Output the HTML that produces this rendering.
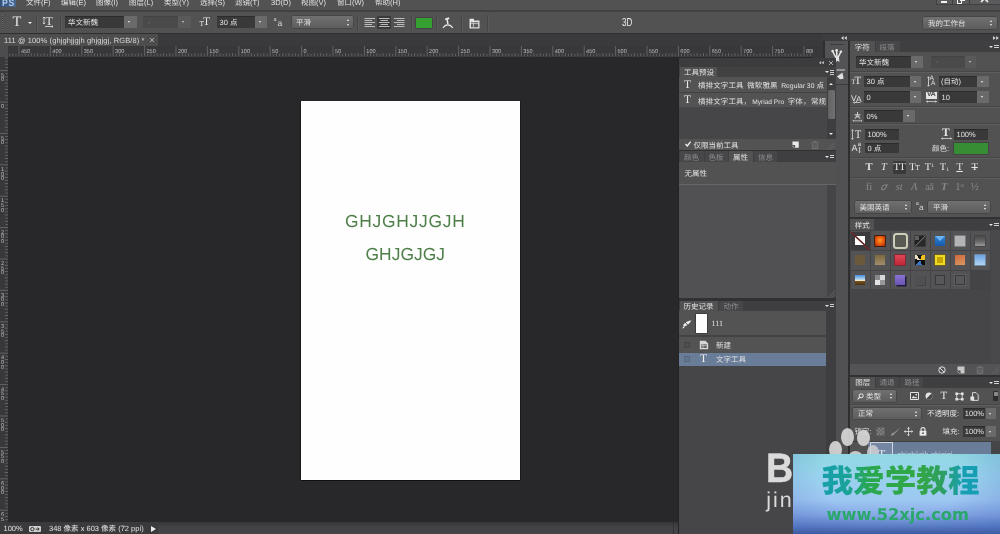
<!DOCTYPE html>
<html lang="zh-CN">
<head>
<meta charset="utf-8">
<title>111 @ 100% (ghjghjjgjh ghjgjgj, RGB/8) *</title>
<style>
html,body{margin:0;padding:0}
body{width:1000px;height:534px;overflow:hidden;position:relative;background:#28272a;
 font-family:"Liberation Sans","Noto Sans CJK SC",sans-serif;font-size:7.5px;line-height:9px;color:#e2e2e2;text-rendering:geometricPrecision}
.a{position:absolute}
.t{position:absolute;white-space:nowrap}
.sf{font-family:"Liberation Serif","Noto Serif CJK SC",serif}
.inp{position:absolute;background:#3a3a3a;box-shadow:inset 0 1px 0 #2c2c2c}
.btn{position:absolute;background:#6b6b6b}
.btn:after{content:"";position:absolute;left:50%;top:50%;margin:-.8px 0 0 -1.8px;border:1.8px solid transparent;border-top:2.2px solid #f0f0f0;border-bottom:0}
.dd{position:absolute;background:linear-gradient(#717171,#5e5e5e);border-radius:1.5px;box-shadow:0 0 0 .5px #3c3c3c}
.ud{position:absolute;width:3.4px;height:6.2px;margin:.4px 0 0 .3px}
.ud:before{content:"";position:absolute;left:0;top:0;border:1.7px solid transparent;border-bottom:2.2px solid #f0f0f0;border-top:0}
.ud:after{content:"";position:absolute;left:0;bottom:0;border:1.7px solid transparent;border-top:2.2px solid #f0f0f0;border-bottom:0}
.vsep{position:absolute;width:1px;background:#464646;box-shadow:1px 0 0 #5c5c5c}
.hl{position:absolute;height:1px;background:#5f5f5f;box-shadow:0 -1px 0 #474747}
.tabrow{position:absolute;background:#424242}
.tab{position:absolute;background:#535353;top:0;bottom:0}
.dim{color:#8e8e8e}
.menuic{width:9px;height:5px}
.menuic:before{content:"";position:absolute;left:-.3px;top:1.3px;border:2px solid transparent;border-top:2.4px solid #e4e4e4;border-bottom:0}
.menuic:after{content:"";position:absolute;left:4.5px;top:0;width:4.5px;height:4.5px;background:repeating-linear-gradient(#d0d0d0 0 .9px,transparent .9px 1.8px)}
</style>
</head>
<body>
<div id="root" style="position:absolute;left:0;top:0;width:1000px;height:534px;overflow:hidden;will-change:transform;opacity:.999">

<!-- ===== menu bar ===== -->
<div class="a" id="menubar" style="left:0;top:0;width:1000px;height:11px;background:#535353;overflow:hidden">
 <div class="a" style="left:0;top:0;width:15.5px;height:7px;background:linear-gradient(90deg,#35527a,#48668f)"></div><div class="t" style="left:2px;top:-.9px;font-size:9.6px;line-height:9px;font-weight:bold;color:#b0cbee;letter-spacing:.9px;transform:scaleX(.9);transform-origin:0 0">PS</div>
 <div class="t" style="left:26px;top:-1.6px">文件(F)</div>
 <div class="t" style="left:61px;top:-1.6px">编辑(E)</div>
 <div class="t" style="left:96px;top:-1.6px">图像(I)</div>
 <div class="t" style="left:129px;top:-1.6px">图层(L)</div>
 <div class="t" style="left:164px;top:-1.6px">类型(Y)</div>
 <div class="t" style="left:200px;top:-1.6px">选择(S)</div>
 <div class="t" style="left:235px;top:-1.6px">滤镜(T)</div>
 <div class="t" style="left:271px;top:-1.6px">3D(D)</div>
 <div class="t" style="left:301px;top:-1.6px">视图(V)</div>
 <div class="t" style="left:337px;top:-1.6px">窗口(W)</div>
 <div class="t" style="left:375px;top:-1.6px">帮助(H)</div>
 <!-- window controls -->
 <div class="a" style="left:935.5px;top:-1px;width:64.5px;height:5.6px;background:#5c5b5d;border:1px solid #414042;border-right:0;box-sizing:border-box"></div>
 <div class="a" style="left:952px;top:0;width:1px;height:5px;background:#3e3e3e"></div>
 <div class="a" style="left:969px;top:0;width:1px;height:5px;background:#3e3e3e"></div>
 <div class="a" style="left:941px;top:1px;width:6px;height:2px;background:#f2f2f2"></div>
 <div class="a" style="left:957.3px;top:-1.5px;width:5.2px;height:5px;border:1.6px solid #f2f2f2;box-sizing:border-box"></div>
 <div class="a" style="left:960px;top:-3.5px;width:4.6px;height:4.500px;border:1.5px solid #f2f2f2;box-sizing:border-box"></div>
 <svg class="a" style="left:979.5px;top:-5px" width="9" height="8" viewBox="0 0 9 8"><path d="M1 0L8 7M8 0L1 7" stroke="#f2f2f2" stroke-width="1.6" fill="none"/></svg>
</div>
<div class="a" style="left:0;top:10.4px;width:1000px;height:1.5px;background:#424143"></div><div class="a" style="left:0;top:11.9px;width:1000px;height:.8px;background:#5a595b"></div>

<!-- ===== options bar ===== -->
<div class="a" id="optbar" style="left:0;top:12px;width:1000px;height:21px;background:#535353">
 <div class="a" style="left:2px;top:3px;width:1px;height:15px;background:repeating-linear-gradient(#6e6e6e 0 1px,#3e3e3e 1px 2px)"></div>
 <div class="t sf" style="left:12.5px;top:1.5px;font-size:14.5px;line-height:16px;color:#e6e6e6">T</div>
 <div class="a" style="left:28px;top:10px;border:2px solid transparent;border-top:2.5px solid #f0f0f0;border-bottom:0"></div>
 <div class="vsep" style="left:36px;top:3px;height:16px"></div>
 <!-- vertical/horizontal toggle -->
 <div class="t sf" style="left:45.5px;top:2.5px;font-size:12px;line-height:13px;color:#e6e6e6">T</div>
 <svg class="a" style="left:42px;top:4px" width="13" height="13" viewBox="0 0 13 13"><path d="M2 1V8M1 2.2L2 1L3 2.2M1 6.8L2 8L3 6.8M3 10.5H11M9.8 9.5L11 10.5L9.8 11.5" stroke="#e6e6e6" stroke-width=".8" fill="none"/></svg>
 <div class="vsep" style="left:60px;top:3px;height:16px"></div>
 <!-- font family -->
 <div class="inp" style="left:64.5px;top:4px;width:59px;height:12px"></div>
 <div class="btn" style="left:123.5px;top:4px;width:13.3px;height:12px"></div>
 <div class="t" style="left:68px;top:6px">华文新魏</div>
 <!-- font style (disabled) -->
 <div class="inp" style="left:143px;top:4px;width:35px;height:12px;background:#4b4b4b;box-shadow:inset 0 1px 0 #444"></div>
 <div class="btn" style="left:178px;top:4px;width:12.5px;height:12px;background:#5d5d5d;opacity:.8"></div>
 <div class="t" style="left:148px;top:5.5px;color:#777">-</div>
 <!-- size -->
 <div class="t sf" style="left:199.5px;top:6.8px;font-size:7.5px;line-height:10px;color:#e6e6e6">T</div>
 <div class="t sf" style="left:203px;top:3.5px;font-size:11.5px;line-height:13px;color:#e6e6e6">T</div>
 <div class="inp" style="left:216.5px;top:4px;width:38px;height:12px"></div>
 <div class="btn" style="left:254.5px;top:4px;width:12px;height:12px"></div>
 <div class="t" style="left:219.5px;top:6px">30 点</div>
 <!-- aa -->
 <div class="t" style="left:273.5px;top:4.5px;font-size:5.5px;line-height:7px;color:#d8d8d8">a</div>
 <div class="t" style="left:277.5px;top:6px;font-size:8.5px;line-height:10px;color:#d8d8d8">a</div>
 <div class="dd" style="left:291.5px;top:4px;width:61px;height:12px"></div>
 <div class="t" style="left:296px;top:6px">平滑</div>
 <div class="ud" style="left:346.5px;top:7px"></div>
 <div class="vsep" style="left:357px;top:3px;height:16px"></div>
 <!-- align -->
 <div class="a" style="left:377px;top:4px;width:14px;height:13px;background:#3b3b3b;border-radius:1px"></div>
 <svg class="a" style="left:364px;top:6px" width="42" height="10" viewBox="0 0 42 10"><g stroke="#bdbdbd" stroke-width="1">
  <path d="M0.5 .5H11M0.5 2.5H8M0.5 4.500H11M0.5 6.500H8M0.5 8.500H11"/>
  <path d="M15 .5H25.500M16.500 2.500H24M15 4.500H25.500M16.500 6.500H24M15 8.500H25.500"/>
  <path d="M30 .5H40.500M33 2.500H40.500M30 4.500H40.500M33 6.500H40.500M30 8.500H40.500"/></g></svg>
 <div class="vsep" style="left:411px;top:3px;height:16px"></div>
 <div class="a" style="left:415.5px;top:5.5px;width:16px;height:10px;background:#37a033;box-shadow:0 0 0 .6px #3d3d3d"></div>
 <div class="vsep" style="left:436px;top:3px;height:16px"></div>
 <!-- warp text -->
 <svg class="a" style="left:442px;top:5px" width="12" height="12" viewBox="0 0 12 12"><path d="M3.2 2.3L7.2 1.2" stroke="#ececec" stroke-width="1.8" fill="none"/><path d="M5.2 2.4L5.8 7" stroke="#ececec" stroke-width="1.5"/><path d="M1 11C3.5 6.8 8 6.8 10.8 11" stroke="#ececec" stroke-width="1.1" fill="none"/></svg>
 <div class="vsep" style="left:460.5px;top:3px;height:16px"></div>
 <!-- panels toggle -->
 <svg class="a" style="left:468.5px;top:5.5px" width="11" height="11" viewBox="0 0 11 11"><path d="M.5 .8H5V2.6H10.5V10.5H.5Z" fill="#e4e4e4"/><path d="M2 4.2H9.2V9.3H2Z" fill="#5a5a5a"/><path d="M2 5.6H9.2M4.4 4.2V9.3" stroke="#e4e4e4" stroke-width=".7"/></svg>
 <div class="vsep" style="left:486.5px;top:3px;height:16px"></div>
 <div class="t" style="left:622px;top:4.8px;font-size:11.6px;line-height:12px;color:#ececec;transform:scaleX(.7);transform-origin:0 0">3D</div>
 <!-- workspace -->
 <div class="dd" style="left:923px;top:5px;width:73.5px;height:12px"></div>
 <div class="t" style="left:928px;top:6.5px">我的工作台</div>
 <div class="ud" style="left:990px;top:7.5px"></div>
</div>
<div class="a" style="left:0;top:33px;width:1000px;height:1px;background:#303030"></div>

<!-- ===== doc tab bar ===== -->
<div class="a" id="doctabs" style="left:0;top:34px;width:1000px;height:12px;background:#3b3a3d">
 <div class="a" style="left:0;top:0;width:158px;height:12px;background:#4e4e4e"></div>
 <div class="t" style="left:4px;top:2px;color:#dcdcdc;letter-spacing:.1px">111 @ 100% (ghjghjjgjh ghjgjgj, RGB/8) *</div>
 <svg class="a" style="left:149.5px;top:4px" width="4" height="4" viewBox="0 0 4 4"><path d="M0 0L4 4M4 0L0 4" stroke="#c4c4c4" stroke-width=".8"/></svg>
</div>

<!-- ===== rulers ===== -->
<div class="a" id="hruler" style="left:0;top:46px;width:813px;height:10.5px;background:#39383b;overflow:hidden"><svg class="a" style="left:0;top:0" width="824" height="10.5" viewBox="0 0 824 10.5"><path d="M9.6 7.8V10.5M15.9 7.8V10.5M22.1 7.8V10.5M28.4 7.8V10.5M34.7 7.8V10.5M41.0 7.8V10.5M47.3 7.8V10.5M53.5 7.8V10.5M59.8 7.8V10.5M66.1 7.8V10.5M72.4 7.8V10.5M78.7 7.8V10.5M84.9 7.8V10.5M91.2 7.8V10.5M97.5 7.8V10.5M103.8 7.8V10.5M110.1 7.8V10.5M116.3 7.8V10.5M122.6 7.8V10.5M128.9 7.8V10.5M135.2 7.8V10.5M141.5 7.8V10.5M147.7 7.8V10.5M154.0 7.8V10.5M160.3 7.8V10.5M166.6 7.8V10.5M172.9 7.8V10.5M179.1 7.8V10.5M185.4 7.8V10.5M191.7 7.8V10.5M198.0 7.8V10.5M204.3 7.8V10.5M210.5 7.8V10.5M216.8 7.8V10.5M223.1 7.8V10.5M229.4 7.8V10.5M235.7 7.8V10.5M241.9 7.8V10.5M248.2 7.8V10.5M254.5 7.8V10.5M260.8 7.8V10.5M267.1 7.8V10.5M273.3 7.8V10.5M279.6 7.8V10.5M285.9 7.8V10.5M292.2 7.8V10.5M298.5 7.8V10.5M304.7 7.8V10.5M311.0 7.8V10.5M317.3 7.8V10.5M323.6 7.8V10.5M329.9 7.8V10.5M336.1 7.8V10.5M342.4 7.8V10.5M348.7 7.8V10.5M355.0 7.8V10.5M361.3 7.8V10.5M367.5 7.8V10.5M373.8 7.8V10.5M380.1 7.8V10.5M386.4 7.8V10.5M392.7 7.8V10.5M398.9 7.8V10.5M405.2 7.8V10.5M411.5 7.8V10.5M417.8 7.8V10.5M424.1 7.8V10.5M430.3 7.8V10.5M436.6 7.8V10.5M442.9 7.8V10.5M449.2 7.8V10.5M455.5 7.8V10.5M461.7 7.8V10.5M468.0 7.8V10.5M474.3 7.8V10.5M480.6 7.8V10.5M486.9 7.8V10.5M493.1 7.8V10.5M499.4 7.8V10.5M505.7 7.8V10.5M512.0 7.8V10.5M518.3 7.8V10.5M524.5 7.8V10.5M530.8 7.8V10.5M537.1 7.8V10.5M543.4 7.8V10.5M549.7 7.8V10.5M555.9 7.8V10.5M562.2 7.8V10.5M568.5 7.8V10.5M574.8 7.8V10.5M581.1 7.8V10.5M587.3 7.8V10.5M593.6 7.8V10.5M599.9 7.8V10.5M606.2 7.8V10.5M612.5 7.8V10.5M618.7 7.8V10.5M625.0 7.8V10.5M631.3 7.8V10.5M637.6 7.8V10.5M643.9 7.8V10.5M650.1 7.8V10.5M656.4 7.8V10.5M662.7 7.8V10.5M669.0 7.8V10.5M675.3 7.8V10.5M681.5 7.8V10.5M687.8 7.8V10.5M694.1 7.8V10.5M700.4 7.8V10.5M706.7 7.8V10.5M712.9 7.8V10.5M719.2 7.8V10.5M725.5 7.8V10.5M731.8 7.8V10.5M738.1 7.8V10.5M744.3 7.8V10.5M750.6 7.8V10.5M756.9 7.8V10.5M763.2 7.8V10.5M769.5 7.8V10.5M775.7 7.8V10.5M782.0 7.8V10.5M788.3 7.8V10.5M794.6 7.8V10.5M800.9 7.8V10.5M807.1 7.8V10.5M813.4 7.8V10.5M819.7 7.8V10.5" stroke="#605f62" stroke-width="1"/><path d="M12.7 7.2V10.5M25.3 7.2V10.5M31.6 7.2V10.5M37.8 7.2V10.5M44.1 7.2V10.5M56.7 7.2V10.5M63.0 7.2V10.5M69.2 7.2V10.5M75.5 7.2V10.5M88.1 7.2V10.5M94.4 7.2V10.5M100.6 7.2V10.5M106.9 7.2V10.5M119.5 7.2V10.5M125.8 7.2V10.5M132.0 7.2V10.5M138.3 7.2V10.5M150.9 7.2V10.5M157.2 7.2V10.5M163.4 7.2V10.5M169.7 7.2V10.5M182.3 7.2V10.5M188.6 7.2V10.5M194.8 7.2V10.5M201.1 7.2V10.5M213.7 7.2V10.5M220.0 7.2V10.5M226.2 7.2V10.5M232.5 7.2V10.5M245.1 7.2V10.5M251.4 7.2V10.5M257.6 7.2V10.5M263.9 7.2V10.5M276.5 7.2V10.5M282.8 7.2V10.5M289.0 7.2V10.5M295.3 7.2V10.5M307.9 7.2V10.5M314.2 7.2V10.5M320.4 7.2V10.5M326.7 7.2V10.5M339.3 7.2V10.5M345.6 7.2V10.5M351.8 7.2V10.5M358.1 7.2V10.5M370.7 7.2V10.5M377.0 7.2V10.5M383.2 7.2V10.5M389.5 7.2V10.5M402.1 7.2V10.5M408.4 7.2V10.5M414.6 7.2V10.5M420.9 7.2V10.5M433.5 7.2V10.5M439.8 7.2V10.5M446.0 7.2V10.5M452.3 7.2V10.5M464.9 7.2V10.5M471.2 7.2V10.5M477.4 7.2V10.5M483.7 7.2V10.5M496.3 7.2V10.5M502.6 7.2V10.5M508.8 7.2V10.5M515.1 7.2V10.5M527.7 7.2V10.5M534.0 7.2V10.5M540.2 7.2V10.5M546.5 7.2V10.5M559.1 7.2V10.5M565.4 7.2V10.5M571.6 7.2V10.5M577.9 7.2V10.5M590.5 7.2V10.5M596.8 7.2V10.5M603.0 7.2V10.5M609.3 7.2V10.5M621.9 7.2V10.5M628.2 7.2V10.5M634.4 7.2V10.5M640.7 7.2V10.5M653.3 7.2V10.5M659.6 7.2V10.5M665.8 7.2V10.5M672.1 7.2V10.5M684.7 7.2V10.5M691.0 7.2V10.5M697.2 7.2V10.5M703.5 7.2V10.5M716.1 7.2V10.5M722.4 7.2V10.5M728.6 7.2V10.5M734.9 7.2V10.5M747.5 7.2V10.5M753.8 7.2V10.5M760.0 7.2V10.5M766.3 7.2V10.5M778.9 7.2V10.5M785.2 7.2V10.5M791.4 7.2V10.5M797.7 7.2V10.5M810.3 7.2V10.5M816.6 7.2V10.5M822.8 7.2V10.5" stroke="#656467" stroke-width="1"/><path d="M19.0 0V10.5M50.4 0V10.5M81.8 0V10.5M113.2 0V10.5M144.6 0V10.5M176.0 0V10.5M207.4 0V10.5M238.8 0V10.5M270.2 0V10.5M301.6 0V10.5M333.0 0V10.5M364.4 0V10.5M395.8 0V10.5M427.2 0V10.5M458.6 0V10.5M490.0 0V10.5M521.4 0V10.5M552.8 0V10.5M584.2 0V10.5M615.6 0V10.5M647.0 0V10.5M678.4 0V10.5M709.8 0V10.5M741.2 0V10.5M772.6 0V10.5M804.0 0V10.5" stroke="#69686b" stroke-width=".9"/><g font-size="5.6" fill="#bdbdbd" font-family="Liberation Sans, sans-serif" text-rendering="geometricPrecision"><text x="20.9" y="6.9">450</text><text x="52.3" y="6.9">400</text><text x="83.7" y="6.9">350</text><text x="115.1" y="6.9">300</text><text x="146.5" y="6.9">250</text><text x="177.9" y="6.9">200</text><text x="209.3" y="6.9">150</text><text x="240.7" y="6.9">100</text><text x="272.1" y="6.9">50</text><text x="303.5" y="6.9">0</text><text x="334.9" y="6.9">50</text><text x="366.3" y="6.9">100</text><text x="397.7" y="6.9">150</text><text x="429.1" y="6.9">200</text><text x="460.5" y="6.9">250</text><text x="491.9" y="6.9">300</text><text x="523.3" y="6.9">350</text><text x="554.7" y="6.9">400</text><text x="586.1" y="6.9">450</text><text x="617.5" y="6.9">500</text><text x="648.9" y="6.9">550</text><text x="680.3" y="6.9">600</text><text x="711.7" y="6.9">650</text><text x="743.1" y="6.9">700</text><text x="774.5" y="6.9">750</text><text x="805.9" y="6.9">800</text></g></svg></div>
<div class="a" id="vruler" style="left:0;top:56.5px;width:8px;height:466px;background:#39383b;overflow:hidden"><svg class="a" style="left:0;top:0" width="8" height="466" viewBox="0 0 8 466"><path d="M5.3 4.2H8M5.3 10.5H8M5.3 16.7H8M5.3 23.0H8M5.3 29.3H8M5.3 35.6H8M5.3 41.9H8M5.3 48.1H8M5.3 54.4H8M5.3 60.7H8M5.3 67.0H8M5.3 73.3H8M5.3 79.5H8M5.3 85.8H8M5.3 92.1H8M5.3 98.4H8M5.3 104.7H8M5.3 110.9H8M5.3 117.2H8M5.3 123.5H8M5.3 129.8H8M5.3 136.1H8M5.3 142.3H8M5.3 148.6H8M5.3 154.9H8M5.3 161.2H8M5.3 167.5H8M5.3 173.7H8M5.3 180.0H8M5.3 186.3H8M5.3 192.6H8M5.3 198.9H8M5.3 205.1H8M5.3 211.4H8M5.3 217.7H8M5.3 224.0H8M5.3 230.3H8M5.3 236.5H8M5.3 242.8H8M5.3 249.1H8M5.3 255.4H8M5.3 261.7H8M5.3 267.9H8M5.3 274.2H8M5.3 280.5H8M5.3 286.8H8M5.3 293.1H8M5.3 299.3H8M5.3 305.6H8M5.3 311.9H8M5.3 318.2H8M5.3 324.5H8M5.3 330.7H8M5.3 337.0H8M5.3 343.3H8M5.3 349.6H8M5.3 355.9H8M5.3 362.1H8M5.3 368.4H8M5.3 374.7H8M5.3 381.0H8M5.3 387.3H8M5.3 393.5H8M5.3 399.8H8M5.3 406.1H8M5.3 412.4H8M5.3 418.7H8M5.3 424.9H8M5.3 431.2H8M5.3 437.5H8M5.3 443.8H8M5.3 450.1H8M5.3 456.3H8M5.3 462.6H8" stroke="#605f62" stroke-width="1"/><path d="M4.7 1.0H8M4.7 7.3H8M4.7 19.9H8M4.7 26.2H8M4.7 32.4H8M4.7 38.7H8M4.7 51.3H8M4.7 57.6H8M4.7 63.8H8M4.7 70.1H8M4.7 82.7H8M4.7 89.0H8M4.7 95.2H8M4.7 101.5H8M4.7 114.1H8M4.7 120.4H8M4.7 126.6H8M4.7 132.9H8M4.7 145.5H8M4.7 151.8H8M4.7 158.0H8M4.7 164.3H8M4.7 176.9H8M4.7 183.2H8M4.7 189.4H8M4.7 195.7H8M4.7 208.3H8M4.7 214.6H8M4.7 220.8H8M4.7 227.1H8M4.7 239.7H8M4.7 246.0H8M4.7 252.2H8M4.7 258.5H8M4.7 271.1H8M4.7 277.4H8M4.7 283.6H8M4.7 289.9H8M4.7 302.5H8M4.7 308.8H8M4.7 315.0H8M4.7 321.3H8M4.7 333.9H8M4.7 340.2H8M4.7 346.4H8M4.7 352.7H8M4.7 365.3H8M4.7 371.6H8M4.7 377.8H8M4.7 384.1H8M4.7 396.7H8M4.7 403.0H8M4.7 409.2H8M4.7 415.5H8M4.7 428.1H8M4.7 434.4H8M4.7 440.6H8M4.7 446.9H8M4.7 459.5H8M4.7 465.8H8" stroke="#656467" stroke-width="1"/><path d="M0 13.6H8M0 45.0H8M0 76.4H8M0 107.8H8M0 139.2H8M0 170.6H8M0 202.0H8M0 233.4H8M0 264.8H8M0 296.2H8M0 327.6H8M0 359.0H8M0 390.4H8M0 421.8H8M0 453.2H8" stroke="#69686b" stroke-width=".9"/><g font-size="5.6" fill="#bdbdbd" font-family="Liberation Sans, sans-serif" text-rendering="geometricPrecision"><text x="1" y="19.8">5</text><text x="1" y="24.4">0</text><text x="1" y="51.2">0</text><text x="1" y="82.6">5</text><text x="1" y="87.2">0</text><text x="1" y="114.0">1</text><text x="1" y="118.6">0</text><text x="1" y="123.2">0</text><text x="1" y="145.4">1</text><text x="1" y="150.0">5</text><text x="1" y="154.6">0</text><text x="1" y="176.8">2</text><text x="1" y="181.4">0</text><text x="1" y="186.0">0</text><text x="1" y="208.2">2</text><text x="1" y="212.8">5</text><text x="1" y="217.4">0</text><text x="1" y="239.6">3</text><text x="1" y="244.2">0</text><text x="1" y="248.8">0</text><text x="1" y="271.0">3</text><text x="1" y="275.6">5</text><text x="1" y="280.2">0</text><text x="1" y="302.4">4</text><text x="1" y="307.0">0</text><text x="1" y="311.6">0</text><text x="1" y="333.8">4</text><text x="1" y="338.4">5</text><text x="1" y="343.0">0</text><text x="1" y="365.2">5</text><text x="1" y="369.8">0</text><text x="1" y="374.4">0</text><text x="1" y="396.6">5</text><text x="1" y="401.2">5</text><text x="1" y="405.8">0</text><text x="1" y="428.0">6</text><text x="1" y="432.6">0</text><text x="1" y="437.2">0</text><text x="1" y="459.4">6</text><text x="1" y="464.0">5</text></g></svg></div>
<div class="a" style="left:0;top:46px;width:7.8px;height:10.5px;background:#4d4c4f"></div>

<!-- ===== document ===== -->
<div class="a" id="doc" style="left:301px;top:101px;width:219px;height:378.5px;background:#fff;box-shadow:0 1px 0 #111,1px 0 0 #1a1a1a,-1px 0 0 #1a1a1a">
 <div class="t" id="l1" style="left:44px;top:109.5px;font-size:17.4px;line-height:20px;color:#4f804a;letter-spacing:.75px">GHJGHJJGJH</div>
 <div class="t" id="l2" style="left:64.5px;top:142.5px;font-size:17.4px;line-height:20px;color:#4f804a;letter-spacing:.05px">GHJGJGJ</div>
</div>

<!-- ===== status bar ===== -->
<div class="a" id="status" style="left:0;top:522px;width:679px;height:12px;background:linear-gradient(#363538,#444346 45%,#454447)">
 <div class="a" style="left:0;top:0;width:158px;height:12px;background:#3b3a3d"></div>
 <div class="a" style="left:28.8px;top:4px;width:12.6px;height:6.2px;background:#cfcfcf;border-radius:1px"></div>
 <svg class="a" style="left:28.8px;top:4px" width="12.6" height="6.2" viewBox="0 0 12.6 6.2"><circle cx="3.4" cy="3.1" r="1.7" fill="none" stroke="#333" stroke-width="1"/><path d="M6.8 3.1H9.6M8.6 1.6L10.2 3.1L8.600 4.600" stroke="#333" stroke-width="1" fill="none"/></svg>
 <div class="a" style="left:673px;top:0;width:1px;height:12px;background:#333235"></div>
 <div class="t" style="left:3.5px;top:1.5px">100%</div>
 <div class="t" style="left:49px;top:1.5px">348 像素 x 603 像素 (72 ppi)</div>
 <div class="a" style="left:151px;top:3.5px;border:3px solid transparent;border-left:5px solid #eee;border-right:0"></div>
</div>


<!-- ===== dock header strip + icon strip ===== -->
<div class="a" style="left:813px;top:46px;width:12px;height:12px;background:#39383b"></div>
<div class="a" style="left:823px;top:34px;width:177px;height:7px;background:#3e3d40"></div>
<svg class="a" style="left:840.5px;top:35.5px" width="6" height="4" viewBox="0 0 6 4"><path d="M2.6 0V4L0 2ZM5.8 0V4L3.2 2Z" fill="#d6d6d6"/></svg>
<svg class="a" style="left:993px;top:35.5px" width="6" height="4" viewBox="0 0 6 4"><path d="M0 0V4L2.6 2ZM3.2 0V4L5.8 2Z" fill="#d6d6d6"/></svg>
<div class="a" style="left:823px;top:41px;width:27px;height:493px;background:#2f2e31"></div>
<div class="a" id="iconstrip" style="left:825px;top:41px;width:23px;height:493px;background:#545355">
 <div class="a" style="left:4.5px;top:2.5px;width:14px;height:1px;background:#3d3d3d"></div>
 <div class="a" style="left:0;top:43.3px;width:23px;height:1px;background:#3a393b"></div><div class="a" style="left:0;top:44.3px;width:23px;height:449px;background:#525153"></div>
 <svg class="a" style="left:6px;top:8px" width="12" height="14" viewBox="0 0 12 14"><g stroke="#e8e8e8" stroke-width="1.5" fill="none" stroke-linecap="round"><path d="M1.5 2L4.6 8"/><path d="M5.6 1L5.9 7.5"/><path d="M10 2.5L7.3 8"/></g><path d="M4.4 7.6L7.8 7.6L8.4 13L6.3 11.5L5 13Z" fill="#e8e8e8"/><circle cx="1.6" cy="2" r="1.2" fill="#e8e8e8"/><circle cx="5.6" cy="1.2" r="1.2" fill="#e8e8e8"/><circle cx="9.9" cy="2.600" r="1.2" fill="#e8e8e8"/></svg>
 <svg class="a" style="left:9px;top:28px" width="12" height="11" viewBox="0 0 12 11"><path d="M2.5 1H11" stroke="#d8d8d8" stroke-width="1"/><path d="M3 7.5L8.5 3.5L9.6 9.8L6 10.2Z" fill="#e0e0e0"/></svg>
</div>

<!-- ===== floating panel group ===== -->
<div class="a" id="float" style="left:677.5px;top:57.5px;width:158.5px;height:477px;background:#252426">
<div class="a" id="floatin" style="left:1.5px;top:0;width:157px;height:477px;background:#535353">
 <!-- title strip -->
 <div class="a" style="left:0;top:0;width:157px;height:9.5px;background:#3d3c3f"></div>
 <svg class="a" style="left:140px;top:3.5px" width="5" height="3.4" viewBox="0 0 6 4"><path d="M2.6 0V4L0 2ZM5.8 0V4L3.2 2Z" fill="#c8c8c8"/></svg>
 <svg class="a" style="left:150.3px;top:3px" width="4" height="4" viewBox="0 0 4 4"><path d="M0 0L4 4M4 0L0 4" stroke="#cfcfcf" stroke-width=".75"/></svg>
 <!-- tool presets -->
 <div class="tabrow" style="left:0;top:9.5px;width:157px;height:10.5px">
  <div class="tab" style="left:1px;width:37px"></div>
  <div class="t" style="left:5px;top:1px">工具预设</div>
  <div class="a menuic" style="left:146px;top:3px"></div>
 </div>
 <div class="a" style="left:0;top:19.7px;width:147.5px;height:14.8px;background:#545454"></div>
 <div class="a" style="left:0;top:34.5px;width:147.5px;height:1px;background:#434343"></div>
 <div class="a" style="left:0;top:35.5px;width:147.5px;height:13.6px;background:#545454"></div>
 <div class="a" style="left:0;top:49.1px;width:147.5px;height:32.4px;background:#474648"></div>
 <div class="t sf" style="left:5px;top:21.5px;font-size:11.5px;line-height:12px;color:#e8e8e8">T</div>
 <div class="t sf" style="left:5px;top:36.5px;font-size:11.5px;line-height:12px;color:#e8e8e8">T</div>
 <div class="t" style="left:19px;top:23.7px;word-spacing:1.4px;letter-spacing:.1px">横排文字工具 微软雅黑 <span style="font-size:6.8px;letter-spacing:0;word-spacing:0">Regular 30</span> <span style="margin-left:-1.5px">点</span></div>
 <div class="t" style="left:19px;top:39px;word-spacing:1.4px;letter-spacing:.1px">横排文字工具，<span style="font-size:6.6px;letter-spacing:0;word-spacing:0;margin-left:1px">Myriad Pro</span> 字体，<span style="margin-left:.5px">常规</span></div>
 <!-- scrollbar -->
 <div class="a" style="left:147.5px;top:20px;width:9.5px;height:61.5px;background:#3f3e41"></div>
 <div class="a" style="left:148.600px;top:32px;width:7.4px;height:29px;background:linear-gradient(90deg,#646464,#727272);border-radius:1.5px"></div>
 <div class="a" style="left:150.3px;top:25px;border:2px solid transparent;border-bottom:2.5px solid #eee;border-top:0"></div>
 <div class="a" style="left:150.3px;top:75px;border:2px solid transparent;border-top:2.5px solid #eee;border-bottom:0"></div>
 <!-- footer -->
 <div class="a" style="left:0;top:81.5px;width:157px;height:11px;background:#545454"></div>
 <svg class="a" style="left:6px;top:83.5px" width="6" height="6" viewBox="0 0 6 6"><path d="M.5 3L2.3 5L5.6 .6" stroke="#f0f0f0" stroke-width="1.3" fill="none"/></svg>
 <div class="t" style="left:14.5px;top:83px">仅限当前工具</div>
 <svg class="a" style="left:113.300px;top:83.8px" width="7.2" height="7.2" viewBox="0 0 8 8"><path d="M.5 .5H7.5V7.5H3.5V4.5H.5Z" fill="#ececec"/><path d="M.5 5.5L2.5 7.5" stroke="#ececec" stroke-width=".8"/></svg>
 <svg class="a" style="left:131.5px;top:83.5px" width="8" height="8" viewBox="0 0 8 8"><path d="M.5 1.8H7.5M2.8 1.5V.5H5.2V1.5M1.3 2.5V7.5H6.7V2.5M3 3.5V6.5M5 3.5V6.5" stroke="#7a7a7a" stroke-width=".8" fill="none"/></svg>
 <svg class="a" style="left:147px;top:84px" width="8" height="8" viewBox="0 0 8 8"><path d="M8 1L1 8M8 4L4 8" stroke="#6a6a6a" stroke-width=".8"/></svg>

 <!-- properties group -->
 <div class="a" style="left:0;top:92.5px;width:157px;height:1px;background:#323134"></div>
 <div class="tabrow" style="left:0;top:93.5px;width:157px;height:11px;background:#403f42">
  <div class="tab" style="left:1px;width:23.5px;background:#48474a"></div>
  <div class="tab" style="left:25.5px;width:23px;background:#48474a"></div>
  <div class="tab" style="left:49.5px;width:24.5px"></div>
  <div class="tab" style="left:75px;width:22.5px;background:#48474a"></div>
  <div class="t dim" style="left:5px;top:1.5px">颜色</div>
  <div class="t dim" style="left:29.5px;top:1.5px">色板</div>
  <div class="t" style="left:54px;top:1.5px">属性</div>
  <div class="t dim" style="left:79px;top:1.5px">信息</div>
  <div class="a menuic" style="left:146px;top:3.5px"></div>
 </div>
 <div class="t" style="left:5.5px;top:111px">无属性</div>
 <div class="a" style="left:0;top:126.2px;width:157px;height:1px;background:#676668"></div><div class="a" style="left:0;top:127.2px;width:147.5px;height:113.300px;background:#525153"></div>
 <div class="a" style="left:147.5px;top:127px;width:9.5px;height:113.5px;background:#464547"></div>
 <svg class="a" style="left:148px;top:232px" width="8" height="8" viewBox="0 0 8 8"><path d="M8 1L1 8M8 4L4 8" stroke="#6a6a6a" stroke-width=".8"/></svg>

 <!-- history group -->
 <div class="a" style="left:0;top:240.5px;width:157px;height:2.5px;background:#323134"></div>
 <div class="tabrow" style="left:0;top:243px;width:157px;height:10.5px;background:#403f42">
  <div class="tab" style="left:1px;width:38px"></div>
  <div class="tab" style="left:40px;width:24px;background:#48474a"></div>
  <div class="t" style="left:4.5px;top:1px">历史记录</div>
  <div class="t dim" style="left:44.5px;top:1px">动作</div>
  <div class="a menuic" style="left:146px;top:3.5px"></div>
 </div>
 <div class="a" style="left:0;top:253.5px;width:147px;height:24.5px;background:#545454"></div>
 <div class="a" style="left:0;top:277px;width:147px;height:2.8px;background:#444345"></div>
 <div class="a" style="left:0;top:279.8px;width:147px;height:15.2px;background:#545454"></div>
 <div class="a" style="left:0;top:295.2px;width:147px;height:13.1px;background:#6a7d99"></div>
 <div class="a" style="left:0;top:308.3px;width:157px;height:168.7px;background:#474648"></div>
 <div class="a" style="left:147.3px;top:253.5px;width:9.7px;height:224px;background:#3f3e41"></div>
 <!-- snapshot row -->
 <svg class="a" style="left:3px;top:261.3px" width="10" height="10" viewBox="0 0 10 10"><path d="M1 6.2C2.5 3.5 5.5 1.8 9.3 1.2C8.2 4.2 5.5 6.4 2.6 7.6Z" fill="#ececec"/><path d="M.4 9.4C.8 8 1.4 7.2 2.4 7.4C2.8 8.6 1.8 9.4 .4 9.4Z" fill="#ececec"/><path d="M3 3L7 7.5" stroke="#545454" stroke-width="1"/></svg>
 <div class="a" style="left:16.5px;top:256.4px;width:11.5px;height:18.8px;background:#fff;box-shadow:0 0 0 .6px #333"></div>
 <div class="t sf" style="left:32.5px;top:261.6px;font-size:8px">111</div>
 <!-- rows -->
 <div class="a" style="left:5px;top:284.2px;width:6px;height:6px;box-sizing:border-box;border:1px solid #454545;background:#505050"></div>
 <svg class="a" style="left:20px;top:282.6px" width="10" height="10" viewBox="0 0 10 10"><path d="M.8 .8H6.4L9.2 3.4V9.2H.8Z" fill="#d8d8d8"/><path d="M2.2 4.2H7.8V8H2.2Z" fill="#6a6a6a"/><path d="M2.2 5.4H7.8M4 4.2V8" stroke="#d8d8d8" stroke-width=".6"/></svg>
 <div class="t" style="left:37px;top:283px">新建</div>
 <div class="a" style="left:5px;top:298.4px;width:6px;height:6px;box-sizing:border-box;border:1px solid #56677f;background:#64778f"></div>
 <div class="t sf" style="left:21px;top:295.2px;font-size:11.5px;line-height:12px;color:#f0f0f0">T</div>
 <div class="t" style="left:37px;top:297.1px">文字工具</div>
</div>
</div>

<div class="a" id="dock" style="left:850px;top:41px;width:150px;height:493px;background:#323134">
<div class="a" id="charp" style="left:0;top:0;width:150px;height:176px;background:#535353">
<div class="tabrow" style="left:0;top:0;width:150px;height:11px;background:#403f42"><div class="tab" style="left:0;width:24.5px"></div><div class="tab" style="left:25.5px;width:24.5px;background:#48474a"></div><div class="t" style="left:4.8px;top:1.5px">字符</div><div class="t dim" style="left:29.5px;top:1.5px">段落</div><div class="a menuic" style="left:139.5px;top:3.5px"></div></div>
<div class="inp" style="left:6px;top:15.2px;width:55px;height:11.6px;"></div>
<div class="btn" style="left:61px;top:15.2px;width:12.3px;height:11.6px;"></div>
<div class="t" style="left:9px;top:16.7px;">华文新魏</div>
<div class="inp" style="left:81.4px;top:15.2px;width:33.2px;height:11.6px;background:#4b4b4b;box-shadow:inset 0 1px 0 #444"></div>
<div class="btn" style="left:114.6px;top:15.2px;width:11.8px;height:11.6px;background:#5d5d5d;opacity:.8"></div>
<div class="t" style="left:86px;top:16.2px;color:#777">-</div>
<div class="hl" style="left:0;top:30.5px;width:150px"></div>
<div class="t sf" style="left:1.3px;top:37.2px;font-size:7px;line-height:9px;color:#e6e6e6">T</div>
<div class="t sf" style="left:4.5px;top:34.3px;font-size:11px;line-height:12px;color:#e6e6e6">T</div>
<div class="inp" style="left:14.4px;top:34.6px;width:45.6px;height:11.8px;"></div>
<div class="btn" style="left:60px;top:34.6px;width:11px;height:11.8px;"></div>
<div class="t" style="left:16.5px;top:36.2px;">30 点</div>
<svg class="a" style="left:76.5px;top:34.5px" width="10" height="12" viewBox="0 0 10 12"><path d="M1.5 .8V10.2M.5 2L1.5 .8L2.5 2M.5 9L1.5 10.2L2.5 9" stroke="#e2e2e2" stroke-width=".8" fill="none"/></svg>
<div class="t" style="left:79.5px;top:33.8px;font-size:6.5px;line-height:8px;color:#e2e2e2">A</div>
<div class="t" style="left:81px;top:39px;font-size:6.5px;line-height:8px;color:#e2e2e2">A</div>
<div class="inp" style="left:89px;top:34.6px;width:37.8px;height:11.8px;"></div>
<div class="btn" style="left:126.8px;top:34.6px;width:12.2px;height:11.8px;"></div>
<div class="t" style="left:91px;top:36.2px;">(自动)</div>
<div class="t" style="left:1px;top:51.8px;font-size:8.5px;line-height:10px;color:#e2e2e2">V</div>
<div class="t" style="left:6px;top:52.8px;font-size:8.5px;line-height:10px;color:#e2e2e2">A</div>
<svg class="a" style="left:2.5px;top:60px" width="8" height="3" viewBox="0 0 8 3"><path d="M.5 1.5H7.5M1.7 .5L.5 1.5L1.7 2.5" stroke="#e2e2e2" stroke-width=".7" fill="none"/></svg>
<div class="inp" style="left:14.4px;top:50.3px;width:45.6px;height:11.7px;"></div>
<div class="btn" style="left:60px;top:50.3px;width:11px;height:11.7px;"></div>
<div class="t" style="left:16.5px;top:51.8px;">0</div>
<div class="a" style="left:76.3px;top:51.3px;width:10.5px;height:6.5px;background:#e6e6e6"></div>
<div class="t" style="left:77px;top:50.3px;font-size:6.8px;line-height:8.5px;color:#444;font-weight:bold;letter-spacing:-.4px">VA</div>
<svg class="a" style="left:76px;top:59.2px" width="11" height="3" viewBox="0 0 11 3"><path d="M.5 1.5H10.5M1.7 .5L.5 1.5L1.7 2.5M9.3 .5L10.5 1.5L9.3 2.5" stroke="#e6e6e6" stroke-width=".7" fill="none"/></svg>
<div class="inp" style="left:89px;top:50.3px;width:37.8px;height:11.7px;"></div>
<div class="btn" style="left:126.8px;top:50.3px;width:12.2px;height:11.7px;"></div>
<div class="t" style="left:91.5px;top:51.8px;">10</div>
<div class="hl" style="left:0;top:66px;width:150px"></div>
<svg class="a" style="left:1.8px;top:69.5px" width="11" height="11" viewBox="0 0 11 11"><path d="M1 9.8H10M1.8 9L1 9.8L1.8 10.6M9.2 9L10 9.8L9.2 10.6" stroke="#dcdcdc" stroke-width=".7" fill="none"/><path d="M2.5 3.8H8.5M5.5 1V3.8M3 7.8L5.5 3.8L8 7.8M3.6 5.8H7.4" stroke="#dcdcdc" stroke-width=".9" fill="none"/></svg>
<div class="inp" style="left:14.4px;top:69px;width:38.6px;height:11.6px;"></div>
<div class="btn" style="left:53px;top:69px;width:12px;height:11.6px;"></div>
<div class="t" style="left:16.5px;top:70.5px;">0%</div>
<div class="hl" style="left:0;top:83px;width:150px"></div>
<div class="t sf" style="left:4.5px;top:86.6px;font-size:12px;line-height:13px;color:#e6e6e6;transform:scaleX(.85);transform-origin:0 0">T</div>
<svg class="a" style="left:1.3px;top:88px" width="3" height="11" viewBox="0 0 3 11"><path d="M1.5 .6V10.4M.5 1.8L1.5 .6L2.5 1.8M.5 9.2L1.5 10.4L2.5 9.2" stroke="#e2e2e2" stroke-width=".7" fill="none"/></svg>
<div class="inp" style="left:15.2px;top:88px;width:34.1px;height:10.8px;"></div>
<div class="t" style="left:17.5px;top:89.2px;">100%</div>
<div class="t sf" style="left:92px;top:85.8px;font-size:11.5px;line-height:12px;color:#e6e6e6;font-weight:bold">T</div>
<svg class="a" style="left:91px;top:96.3px" width="11" height="3" viewBox="0 0 11 3"><path d="M.5 1.5H10.5M1.7 .5L.5 1.5L1.7 2.5M9.3 .5L10.5 1.5L9.3 2.5" stroke="#e6e6e6" stroke-width=".7" fill="none"/></svg>
<div class="inp" style="left:104px;top:88px;width:34.3px;height:10.8px;"></div>
<div class="t" style="left:106.5px;top:89.2px;">100%</div>
<div class="t" style="left:1.5px;top:102px;font-size:9px;line-height:10px;color:#e2e2e2">A</div>
<div class="t" style="left:7.8px;top:100.6px;font-size:6px;line-height:7px;color:#e2e2e2">a</div>
<svg class="a" style="left:8.3px;top:106.3px" width="3" height="6" viewBox="0 0 3 6"><path d="M1.5 .4V5.6M.5 1.4L1.5 .4L2.5 1.4M.5 4.6L1.5 5.6L2.5 4.6" stroke="#e2e2e2" stroke-width=".7" fill="none"/></svg>
<div class="inp" style="left:15.2px;top:101.6px;width:34.1px;height:10.8px;"></div>
<div class="t" style="left:17.5px;top:102.8px;">0 点</div>
<div class="t" style="left:82px;top:102.8px;">颜色:</div>
<div class="a" style="left:103.7px;top:101.8px;width:34px;height:11px;background:#388e34;box-shadow:0 0 0 .6px #3a3a3a"></div>
<div class="hl" style="left:0;top:116.5px;width:150px"></div>
<div class="a" style="left:42.8px;top:119.8px;width:13.6px;height:13.2px;background:#3b3b3b;border-radius:1px"></div>
<div class="t sf" style="left:9px;top:121.2px;width:20px;text-align:center;font-size:10.5px;line-height:11px;color:#e8e8e8;font-weight:bold">T</div>
<div class="t sf" style="left:23.8px;top:121.2px;width:20px;text-align:center;font-size:10.5px;line-height:11px;color:#e8e8e8;font-style:italic">T</div>
<div class="t sf" style="left:39.3px;top:121.2px;width:20px;text-align:center;font-size:10.5px;line-height:11px;color:#e8e8e8;letter-spacing:-.6px">TT</div>
<div class="t sf" style="left:54.3px;top:121.2px;width:20px;text-align:center;font-size:10.5px;line-height:11px;color:#e8e8e8;letter-spacing:-.4px">T<span style="font-size:7.5px">T</span></div>
<div class="t sf" style="left:69.3px;top:121.2px;width:20px;text-align:center;font-size:10.5px;line-height:11px;color:#e8e8e8;">T<span style="font-size:5.5px;position:relative;top:-3.5px">1</span></div>
<div class="t sf" style="left:84.3px;top:121.2px;width:20px;text-align:center;font-size:10.5px;line-height:11px;color:#e8e8e8;">T<span style="font-size:5.5px;position:relative;top:1px">1</span></div>
<div class="t sf" style="left:99.6px;top:121.2px;width:20px;text-align:center;font-size:10.5px;line-height:11px;color:#e8e8e8;text-decoration:underline">T</div>
<div class="t sf" style="left:114.6px;top:121.2px;width:20px;text-align:center;font-size:10.5px;line-height:11px;color:#e8e8e8;text-decoration:line-through">T</div>
<div class="hl" style="left:0;top:137px;width:150px"></div>
<div class="t sf" style="left:9px;top:141px;width:20px;text-align:center;font-size:10.5px;line-height:11px;color:#8c8c8c;">fi</div>
<div class="t sf" style="left:23.8px;top:141px;width:20px;text-align:center;font-size:10.5px;line-height:11px;color:#8c8c8c;font-style:italic">&#x1D70E;</div>
<div class="t sf" style="left:39.3px;top:141px;width:20px;text-align:center;font-size:10.5px;line-height:11px;color:#8c8c8c;font-style:italic">st</div>
<div class="t sf" style="left:54.3px;top:141px;width:20px;text-align:center;font-size:10.5px;line-height:11px;color:#8c8c8c;font-style:italic">A</div>
<div class="t sf" style="left:69.3px;top:141px;width:20px;text-align:center;font-size:10.5px;line-height:11px;color:#8c8c8c;letter-spacing:-.5px">a&#x0101;</div>
<div class="t sf" style="left:84.3px;top:141px;width:20px;text-align:center;font-size:10.5px;line-height:11px;color:#8c8c8c;font-style:italic;font-weight:bold">T</div>
<div class="t sf" style="left:99.6px;top:141px;width:20px;text-align:center;font-size:10.5px;line-height:11px;color:#8c8c8c;">1<span style="font-size:5.5px;position:relative;top:-3px">st</span></div>
<div class="t sf" style="left:114.6px;top:141px;width:20px;text-align:center;font-size:10.5px;line-height:11px;color:#8c8c8c;">&#189;</div>
<div class="dd" style="left:5.3px;top:160.2px;width:55.7px;height:12px"></div>
<div class="t" style="left:9.5px;top:161.7px;">美国英语</div>
<div class="ud" style="left:54.5px;top:162.8px"></div>
<div class="t" style="left:65.8px;top:160.2px;font-size:5.5px;line-height:7px;color:#d8d8d8">a</div>
<div class="t" style="left:69px;top:161.7px;font-size:8px;line-height:10px;color:#d8d8d8">a</div>
<div class="dd" style="left:78.3px;top:160.2px;width:61.7px;height:12px"></div>
<div class="t" style="left:83px;top:161.7px;">平滑</div>
<div class="ud" style="left:134px;top:162.8px"></div>
</div>
<!--STYLES-START-->
<div class="a" id="stylep" style="left:0;top:178.3px;width:150px;height:155.5px;background:#474648">
<div class="tabrow" style="left:0;top:0;width:150px;height:11px;background:#403f42"><div class="tab" style="left:0;width:24px"></div><div class="t" style="left:4.8px;top:1.5px">样式</div><div class="a menuic" style="left:139.5px;top:3.5px"></div></div>
<div class="a" style="left:0;top:11px;width:140.5px;height:60px;background:#454446"></div>
<div class="a" style="left:140.5px;top:11px;width:9.5px;height:133px;background:#4a494b"></div>
<div class="a" style="left:0.50px;top:12.10px;width:19.05px;height:18.70px;background:#545355">
<div class="a" style="left:4.6px;top:4.3px;width:10px;height:10px"><div class="a" style="left:-4.3px;top:-4px;width:19px;height:18.7px;background:#3c3b3d"></div><svg class="a" style="left:-4.3px;top:-4px" width="19" height="18.7" viewBox="0 0 19 18.7"><path d="M0 0L19 18.7" stroke="#7a2626" stroke-width="1.3"/></svg><div class="a" style="left:.2px;top:0;width:9.8px;height:9.2px;background:#fff"></div><svg class="a" style="left:.2px;top:0" width="9.8" height="9" viewBox="0 0 9.8 9"><path d="M0 0L9.8 9" stroke="#5a1414" stroke-width="1.5"/></svg></div></div>
<div class="a" style="left:20.55px;top:12.10px;width:19.05px;height:18.70px;background:#545355">
<div class="a" style="left:4.6px;top:4.3px;width:10px;height:10px"><div class="a" style="left:0;top:0;width:10px;height:10px;background:radial-gradient(circle at 50% 45%,#ff9a20 0,#f06010 45%,#a02808 100%);box-shadow:0 0 0 .8px #3a1408"></div></div></div>
<div class="a" style="left:40.60px;top:12.10px;width:19.05px;height:18.70px;background:#545355">
<div class="a" style="left:4.6px;top:4.3px;width:10px;height:10px"><div class="a" style="left:-2.7px;top:-2.9px;width:15.6px;height:16px;box-sizing:border-box;border:2.2px solid #cdcdb8;border-radius:3.5px;background:#5b5b55"></div></div></div>
<div class="a" style="left:60.65px;top:12.10px;width:19.05px;height:18.70px;background:#545355">
<div class="a" style="left:4.6px;top:4.3px;width:10px;height:10px"><div class="a" style="left:0;top:0;width:10px;height:10px;background:linear-gradient(135deg,#222 0 45%,#666 50%,#2a2a2a 60% 100%);box-shadow:0 0 0 .6px #2a2a2a"></div><div class="a" style="left:0;top:0;width:4px;height:4px;background:#8a8a8a;opacity:.6"></div></div></div>
<div class="a" style="left:80.70px;top:12.10px;width:19.05px;height:18.70px;background:#545355">
<div class="a" style="left:4.6px;top:4.3px;width:10px;height:10px"><div class="a" style="left:0;top:0;width:10px;height:10px;background:linear-gradient(#2f86dc,#1a58a8)"></div><div class="a" style="left:0;top:0;border:5px solid transparent;border-top:5.2px solid #6cb4f0;border-bottom:0"></div></div></div>
<div class="a" style="left:100.75px;top:12.10px;width:19.05px;height:18.70px;background:#545355">
<div class="a" style="left:4.6px;top:4.3px;width:10px;height:10px"><div class="a" style="left:0;top:0;width:10px;height:10px;background:#b4b3b5;box-shadow:0 0 0 .6px #9a9a9a"></div></div></div>
<div class="a" style="left:120.80px;top:12.10px;width:19.05px;height:18.70px;background:#545355">
<div class="a" style="left:4.6px;top:4.3px;width:10px;height:10px"><div class="a" style="left:0;top:0;width:10px;height:10px;background:linear-gradient(#4a4a4a,#6a6a6a 55%,#9a9a9a);box-shadow:0 0 0 .6px #3e3e3e"></div></div></div>
<div class="a" style="left:0.50px;top:31.80px;width:19.05px;height:18.70px;background:#545355">
<div class="a" style="left:4.6px;top:4.3px;width:10px;height:10px"><div class="a" style="left:0;top:0;width:10px;height:10px;background:#6b5a3c"></div></div></div>
<div class="a" style="left:20.55px;top:31.80px;width:19.05px;height:18.70px;background:#545355">
<div class="a" style="left:4.6px;top:4.3px;width:10px;height:10px"><div class="a" style="left:0;top:0;width:10px;height:10px;background:linear-gradient(#7e6a3e,#a08e6c)"></div></div></div>
<div class="a" style="left:40.60px;top:31.80px;width:19.05px;height:18.70px;background:#545355">
<div class="a" style="left:4.6px;top:4.3px;width:10px;height:10px"><div class="a" style="left:0;top:0;width:10px;height:10px;background:linear-gradient(#e04858,#c02838);box-shadow:0 0 0 .8px #8a2030"></div></div></div>
<div class="a" style="left:60.65px;top:31.80px;width:19.05px;height:18.70px;background:#545355">
<div class="a" style="left:4.6px;top:4.3px;width:10px;height:10px"><div class="a" style="left:0;top:0;width:10px;height:10px;background:conic-gradient(from 20deg,#f0c020 0 20%,#101010 20% 38%,#3878c8 38% 55%,#101010 55% 72%,#e8e0c0 72% 85%,#181818 85% 100%)"></div></div></div>
<div class="a" style="left:80.70px;top:31.80px;width:19.05px;height:18.70px;background:#545355">
<div class="a" style="left:4.6px;top:4.3px;width:10px;height:10px"><div class="a" style="left:0;top:0;width:10px;height:10px;box-sizing:border-box;border:2px solid #f0dc20;background:#c8a408;box-shadow:0 0 0 .6px #7a6408"></div></div></div>
<div class="a" style="left:100.75px;top:31.80px;width:19.05px;height:18.70px;background:#545355">
<div class="a" style="left:4.6px;top:4.3px;width:10px;height:10px"><div class="a" style="left:0;top:0;width:10px;height:10px;background:linear-gradient(160deg,#cf6a3c,#dc9a66)"></div></div></div>
<div class="a" style="left:120.80px;top:31.80px;width:19.05px;height:18.70px;background:#545355">
<div class="a" style="left:4.6px;top:4.3px;width:10px;height:10px"><div class="a" style="left:0;top:0;width:10px;height:10px;background:linear-gradient(#6aa4e4,#b4d4f4);box-shadow:0 0 0 .6px #88b0d8"></div></div></div>
<div class="a" style="left:0.50px;top:51.50px;width:19.05px;height:18.70px;background:#545355">
<div class="a" style="left:4.6px;top:4.3px;width:10px;height:10px"><div class="a" style="left:0;top:0;width:10px;height:10px;background:linear-gradient(#4a90dc 0,#a8d0f0 40%,#f0e8c8 55%,#7a5420 62%,#4a3010 100%)"></div></div></div>
<div class="a" style="left:20.55px;top:51.50px;width:19.05px;height:18.70px;background:#545355">
<div class="a" style="left:4.6px;top:4.3px;width:10px;height:10px"><div class="a" style="left:0;top:0;width:10px;height:10px;background:conic-gradient(#d8d8d8 0 25%,#9a9a9a 25% 50%,#e4e4e4 50% 75%,#8a8a8a 75% 100%)"></div></div></div>
<div class="a" style="left:40.60px;top:51.50px;width:19.05px;height:18.70px;background:#545355">
<div class="a" style="left:4.6px;top:4.3px;width:10px;height:10px"><div class="a" style="left:0;top:0;width:10px;height:10px;background:linear-gradient(#8a74d4,#6a54b4);box-shadow:1.5px 1.5px 0 #1e1a3a"></div></div></div>
<div class="a" style="left:60.65px;top:51.50px;width:19.05px;height:18.70px;background:#545355">
<div class="a" style="left:4.6px;top:4.3px;width:10px;height:10px"><div class="a" style="left:0;top:0;width:10px;height:10px;background:#515052;box-shadow:1px 1px 0 #444"></div></div></div>
<div class="a" style="left:80.70px;top:51.50px;width:19.05px;height:18.70px;background:#545355">
<div class="a" style="left:4.6px;top:4.3px;width:10px;height:10px"><div class="a" style="left:0;top:0;width:10px;height:10px;box-sizing:border-box;border:1px solid #3a3a3a;background:#58575a"></div></div></div>
<div class="a" style="left:100.75px;top:51.50px;width:19.05px;height:18.70px;background:#545355">
<div class="a" style="left:4.6px;top:4.3px;width:10px;height:10px"><div class="a" style="left:0;top:0;width:10px;height:10px;box-sizing:border-box;border:1px solid #3a3a3a;background:#58575a;outline:1px solid #5e5e5e"></div></div></div>
<div class="a" style="left:0;top:144.7px;width:150px;height:10.8px;background:#545355"></div>
<svg class="a" style="left:87.8px;top:146.3px" width="8" height="8" viewBox="0 0 8 8"><circle cx="4" cy="4" r="3.2" stroke="#e0e0e0" stroke-width="1" fill="none"/><path d="M1.8 1.8L6.2 6.2" stroke="#e0e0e0" stroke-width="1"/></svg>
<svg class="a" style="left:107.3px;top:146.3px" width="8" height="8" viewBox="0 0 8 8"><path d="M.5 .5H7.5V7.5H3.5V4.5H.5Z" fill="#c8c8c8"/><path d="M.5 5.5L2.5 7.5" stroke="#c8c8c8" stroke-width=".8"/></svg>
<svg class="a" style="left:125.6px;top:146.3px" width="8" height="8" viewBox="0 0 8 8"><path d="M.5 1.8H7.5M2.8 1.5V.5H5.2V1.5M1.3 2.5V7.5H6.7V2.5M3 3.5V6.5M5 3.5V6.5" stroke="#7c7c7c" stroke-width=".8" fill="none"/></svg>
<svg class="a" style="left:141px;top:146.5px" width="8" height="8" viewBox="0 0 8 8"><path d="M8 1L1 8M8 4L4 8" stroke="#6a6a6a" stroke-width=".8"/></svg>
</div>
<div class="a" id="layerp" style="left:0;top:336px;width:150px;height:157px;background:#535353">
<div class="tabrow" style="left:0;top:0;width:150px;height:10.5px;background:#403f42"><div class="tab" style="left:0;width:25px"></div><div class="tab" style="left:26px;width:23px;background:#48474a"></div><div class="tab" style="left:50px;width:23px;background:#48474a"></div><div class="t" style="left:5.3px;top:1px">图层</div><div class="t dim" style="left:29.6px;top:1px">通道</div><div class="t dim" style="left:54.6px;top:1px">路径</div><div class="a menuic" style="left:139.5px;top:3.5px"></div></div>
<div class="dd" style="left:3.4px;top:13.3px;width:42.6px;height:11.3px"></div>
<svg class="a" style="left:6.5px;top:15.8px" width="7" height="7" viewBox="0 0 7 7"><circle cx="4.2" cy="2.8" r="2" stroke="#f0f0f0" stroke-width="1" fill="none"/><path d="M2.8 4.2L.6 6.4" stroke="#f0f0f0" stroke-width="1.1"/></svg>
<div class="t" style="left:16px;top:14.6px">类型</div>
<div class="ud" style="left:40px;top:15.6px"></div>
<svg class="a" style="left:60px;top:15px" width="9" height="8" viewBox="0 0 9 8"><path d="M.5 .5H8.5V7.5H.5Z" stroke="#e4e4e4" stroke-width="1" fill="#4a4a4a"/><path d="M1.5 6.2L3.5 3.8L5 5.4L6 4.6L7.5 6.2Z" fill="#e4e4e4"/><circle cx="6.3" cy="2.6" r=".9" fill="#e4e4e4"/></svg>
<svg class="a" style="left:75.4px;top:15px" width="8" height="8" viewBox="0 0 8 8"><circle cx="4" cy="4" r="3.5" fill="#e4e4e4"/><path d="M4 .5A3.5 3.5 0 0 1 4 7.5Z" fill="#4a4a4a" transform="rotate(45 4 4)"/></svg>
<div class="t sf" style="left:90.6px;top:12.8px;font-size:11px;line-height:12px;color:#eaeaea">T</div>
<svg class="a" style="left:105px;top:14.5px" width="9" height="9" viewBox="0 0 9 9"><path d="M1.8 1.8H7.2V7.2H1.8Z" stroke="#e4e4e4" stroke-width=".9" fill="none"/><path d="M.4 .4H3V3H.4ZM6 .4H8.6V3H6ZM.4 6H3V8.6H.4ZM6 6H8.6V8.6H6Z" fill="#e4e4e4"/></svg>
<svg class="a" style="left:120.3px;top:14.5px" width="9" height="9" viewBox="0 0 9 9"><path d="M2.5 .6H6L8.2 2.8V8.4H2.5Z" fill="none" stroke="#e4e4e4" stroke-width=".9"/><path d="M.4 4.5H4.2V8.6H.4Z" fill="#e4e4e4"/></svg>
<div class="a" style="left:143px;top:14px;width:5px;height:10px;background:#2e2e2e;border-radius:1px"></div><div class="a" style="left:143.5px;top:14.5px;width:4px;height:4px;background:#8a8a8a;border-radius:.8px"></div>
<div class="hl" style="left:0;top:27.5px;width:150px"></div>
<div class="dd" style="left:3.4px;top:31px;width:67.4px;height:11.3px"></div>
<div class="t" style="left:8px;top:32.3px">正常</div>
<div class="ud" style="left:65px;top:33.3px"></div>
<div class="t" style="left:77px;top:32.3px">不透明度:</div>
<div class="inp" style="left:113.2px;top:31px;width:21.5px;height:11.3px"></div>
<div class="btn" style="left:135.8px;top:31px;width:10.5px;height:11.3px"></div>
<div class="t" style="left:114.8px;top:32.3px">100%</div>
<div class="t" style="left:4.5px;top:50px">锁定:</div>
<div class="a" style="left:27.2px;top:51px;width:6.6px;height:6.6px;background:repeating-conic-gradient(#8a8a8a 0 25%,#5e5e5e 0 50%) 0 0/3.3px 3.3px;box-shadow:0 0 0 .5px #777"></div>
<svg class="a" style="left:39.5px;top:50.2px" width="11" height="9" viewBox="0 0 11 9"><path d="M10.6 .4L4.2 5.6L5 6.6Z" fill="#9a9a9a"/><path d="M.4 8.4C1.5 7.8 2 6 3.6 5.6L4.800 6.800C4 8.400 2 8.800 .4 8.400Z" fill="#9a9a9a"/></svg>
<svg class="a" style="left:54.2px;top:50.2px" width="9" height="9" viewBox="0 0 9 9"><path d="M4.5 .3V8.7M.3 4.5H8.7M3.300 1.600L4.500 .3L5.700 1.600M3.300 7.400L4.500 8.700L5.700 7.400M1.600 3.300L.3 4.500L1.600 5.700M7.400 3.300L8.700 4.500L7.400 5.700" stroke="#e6e6e6" stroke-width=".8" fill="none"/></svg>
<svg class="a" style="left:69.2px;top:49.8px" width="8" height="9" viewBox="0 0 8 9"><path d="M2 4V2.600A2 2 0 0 1 6 2.600V4" stroke="#eaeaea" stroke-width="1.1" fill="none"/><path d="M.6 3.800H7.400V8.700H.6Z" fill="#eaeaea"/><circle cx="4" cy="6.200" r=".9" fill="#555"/></svg>
<div class="t" style="left:92.5px;top:50px">填充:</div>
<div class="inp" style="left:113.2px;top:48.7px;width:21.5px;height:11.3px"></div>
<div class="btn" style="left:135.8px;top:48.7px;width:10.5px;height:11.3px"></div>
<div class="t" style="left:114.8px;top:50px">100%</div>
<div class="a" style="left:0;top:63.8px;width:140.5px;height:1px;background:#3e3e3e"></div>
<div class="a" style="left:18px;top:64.8px;width:122.5px;height:30px;background:#6a7d99"></div>
<div class="a" style="left:20px;top:65.3px;width:22.5px;height:20px;box-sizing:border-box;border:1px solid #cfd6e0;background:#7488a3"></div>
<div class="t sf" style="left:28px;top:71.3px;font-size:12px;line-height:13px;color:#eef2f6">T</div>
<div class="t" style="left:47px;top:73px;color:#d0d8e2">ghjghjjgjh ghjgjgj</div>
<div class="a" style="left:140.5px;top:64px;width:9.5px;height:100px;background:#464547"></div>
</div>
<!--STYLES-END-->
</div>

<!-- ===== watermarks ===== -->
<div class="a" style="left:828.8px;top:440.8px;width:13.1px;height:17px;border-radius:50%;background:#d6d6d6;opacity:.93"></div>
<div class="a" style="left:841.3px;top:427.9px;width:13px;height:17.9px;border-radius:50%;background:#d6d6d6;opacity:.93"></div>
<div class="a" style="left:857px;top:429.5px;width:13px;height:16.5px;border-radius:50%;background:#d6d6d6;opacity:.93"></div>
<div class="a" style="left:867.2px;top:445.3px;width:12.3px;height:16px;border-radius:50%;background:#d6d6d6;opacity:.8"></div>
<div class="a" style="left:847.5px;top:451px;width:15.5px;height:14px;border-radius:50%;background:#d6d6d6;opacity:.9"></div>
<div class="a" style="left:760px;top:440px;width:33px;height:50px;overflow:hidden"><div class="t" style="left:6.3px;top:7.3px;font-size:41px;line-height:42px;font-weight:bold;color:#dcdcdc;letter-spacing:4px;transform:scaleX(.92);transform-origin:0 0;-webkit-text-stroke:.5px #dcdcdc">Bai</div></div>
<div class="t" style="left:766.3px;top:487.6px;font-size:21.5px;line-height:24px;color:#dcdcdc;letter-spacing:2px">jingyan</div>
<div class="a" id="wm" style="left:793px;top:453.7px;width:207px;height:80.3px;background:radial-gradient(ellipse 72% 95% at 48% 30%,rgba(80,110,200,0) 50%,rgba(60,92,182,.34) 100%),linear-gradient(#93dae4 0,#9ad3ee 28%,#9fc8f3 58%,#88abe7 76%,#5f82c8 90%,#3f5c9c 100%)">
 <div class="t" style="left:28.5px;top:4.3px;font-size:31.6px;line-height:46px;font-weight:900;background:linear-gradient(90deg,#17a0ac 0,#1aa49a 16%,#2aa84e 30%,#34a846 62%,#30a060 76%,#17a0b4 90%);-webkit-background-clip:text;background-clip:text;color:transparent;-webkit-text-fill-color:transparent">我爱学教程</div>
 <div class="t" style="left:33.5px;top:51.7px;font-family:'DejaVu Sans','Liberation Sans',sans-serif;font-weight:bold;font-size:16.25px;line-height:20px;color:#2ba86c">www.52xjc.com</div>
</div>


</div>
</body>
</html>
